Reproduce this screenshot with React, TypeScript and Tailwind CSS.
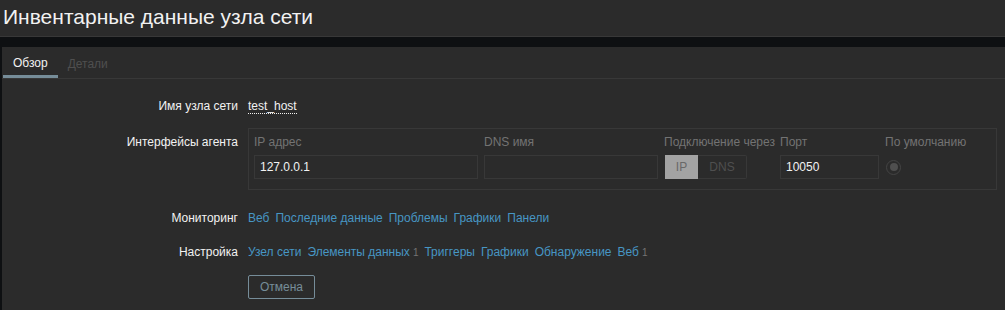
import React from 'react';

const monitoringLinks = ['Веб', 'Последние данные', 'Проблемы', 'Графики', 'Панели'];

const configLinks: { name: string; count?: number }[] = [
  { name: 'Узел сети' },
  { name: 'Элементы данных', count: 1 },
  { name: 'Триггеры' },
  { name: 'Графики' },
  { name: 'Обнаружение' },
  { name: 'Веб', count: 1 },
];

const LinkRow: React.FC<{ items: { name: string; count?: number }[] }> = ({ items }) => (
  <div className="flex items-center gap-[6px]">
    {items.map((item) => (
      <span key={item.name} className="flex items-baseline gap-[3px]">
        <a className="text-[#4796c4] cursor-pointer">{item.name}</a>
        {item.count !== undefined && <sup className="text-[10px] text-[#737373] top-0">{item.count}</sup>}
      </span>
    ))}
  </div>
);

const App: React.FC = () => {
  return (
    <div
      className="w-[1005px] h-[310px] overflow-hidden bg-[#0e1012] text-[12px] text-[#f2f2f2]"
      style={{ fontFamily: '"Liberation Sans", Arial, sans-serif' }}
    >
      {/* header */}
      <header className="h-[37px] bg-[#2b2b2b] border-b border-[#383838] pl-[3px] flex items-center">
        <h1 className="text-[21px] leading-none text-[#f2f2f2] -mt-[3px]">Инвентарные данные узла сети</h1>
      </header>

      <div className="pt-[10px] pl-[2px]">
        <div className="bg-[#2b2b2b] h-[263px]">
          {/* tabs */}
          <div className="flex h-[32px] border-b border-[#383838] pl-[1px]">
            <div className="px-[10px] flex items-center border-b-[3px] border-[#768d99] text-[#f2f2f2] pt-[3px]">
              Обзор
            </div>
            <div className="px-[10px] flex items-center text-[#4f4f4f] pt-[3px]">Детали</div>
          </div>

          {/* form */}
          <div className="pt-[15px] grid grid-cols-[236px_1fr] gap-x-[10px]">
            <div className="h-[24px] flex items-center justify-end">Имя узла сети</div>
            <div className="h-[24px] flex items-center">
              <span className="border-b border-dotted border-[#f2f2f2] leading-[14px] mt-[1px]">test_host</span>
            </div>

            <div className="mt-[10px] pt-[5px] text-right">Интерфейсы агента</div>
            <div className="mt-[10px] w-[749px] h-[62px] border border-[#383838] pl-[5px]">
              <div className="grid grid-cols-[224px_174px_110px_99px_auto] gap-x-[6px]">
                <div className="h-[26px] pt-[4px] text-[#737373]">IP адрес</div>
                <div className="h-[26px] pt-[4px] text-[#737373]">DNS имя</div>
                <div className="h-[26px] pt-[4px] text-[#737373] whitespace-nowrap">Подключение через</div>
                <div className="h-[26px] pt-[4px] text-[#737373]">Порт</div>
                <div className="h-[26px] pt-[4px] text-[#737373]">По умолчанию</div>

                <div className="h-[24px] border border-[#383838] flex items-center px-[5px]">127.0.0.1</div>
                <div className="h-[24px] border border-[#383838]"></div>
                <div className="h-[24px] flex pl-[1px]">
                  <div className="w-[33px] bg-[#a3a3a3] text-[#686868] flex items-center justify-center">IP</div>
                  <div className="w-[49px] border border-l-0 border-[#383838] rounded-r-[2px] text-[#4f4f4f] flex items-center justify-center">
                    DNS
                  </div>
                </div>
                <div className="h-[24px] border border-[#383838] flex items-center px-[5px]">10050</div>
                <div className="h-[24px] flex items-center pl-[1px]">
                  <div className="w-[15px] h-[15px] rounded-full border border-[#444444] flex items-center justify-center">
                    <div className="w-[8px] h-[8px] rounded-full bg-[#4f4f4f]"></div>
                  </div>
                </div>
              </div>
            </div>

            <div className="mt-[16px] h-[24px] flex items-center justify-end">Мониторинг</div>
            <div className="mt-[16px] h-[24px] flex items-center">
              <LinkRow items={monitoringLinks.map((name) => ({ name }))} />
            </div>

            <div className="mt-[10px] h-[24px] flex items-center justify-end">Настройка</div>
            <div className="mt-[10px] h-[24px] flex items-center">
              <LinkRow items={configLinks} />
            </div>

            <div></div>
            <div className="mt-[11px]">
              <button className="h-[24px] w-[67px] border border-[#768d99] rounded-[2px] text-[#768d99] bg-transparent">
                Отмена
              </button>
            </div>
          </div>
        </div>
      </div>
    </div>
  );
};

export default App;
